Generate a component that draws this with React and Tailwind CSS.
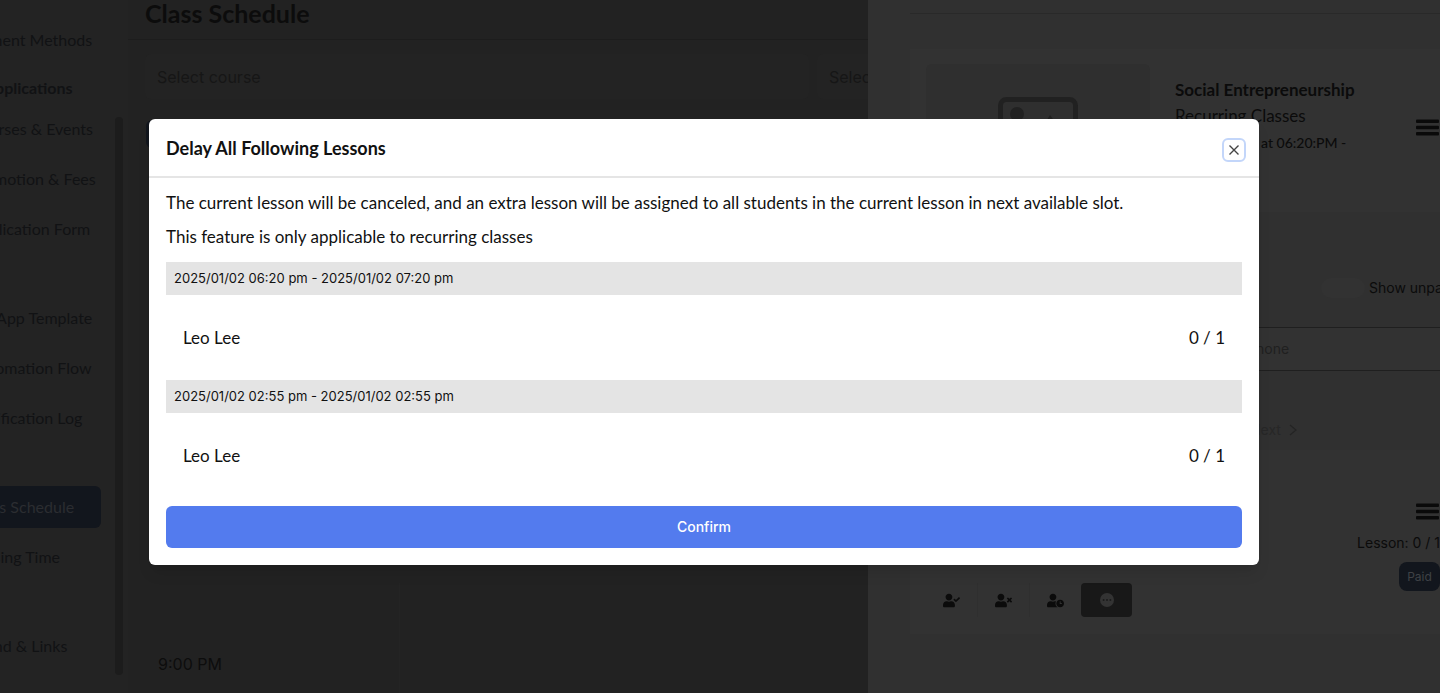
import { FaUserCheck, FaUserClock, FaUserTimes } from "react-icons/fa";

const navGroups = [
  ["Courses & Events", "Promotion & Fees", "Application Form"],
  ["My App Template", "Automation Flow", "Notification Log"],
  ["Class Schedule", "Closing Time"],
  ["Brand & Links"],
];

const lessons = [
  { time: "2025/01/02 06:20 pm - 2025/01/02 07:20 pm", student: "Leo Lee", count: "0 / 1" },
  { time: "2025/01/02 02:55 pm - 2025/01/02 02:55 pm", student: "Leo Lee", count: "0 / 1" },
];

function Bars() {
  return (
    <svg width="24" height="17" viewBox="0 0 24 17" fill="#0a0a0a" aria-hidden="true">
      <rect x="0" y="0.5" width="23" height="3.4" rx="1" />
      <rect x="0" y="6.8" width="23" height="3.4" rx="1" />
      <rect x="0" y="13" width="23" height="3.4" rx="1" />
    </svg>
  );
}

function Sidebar() {
  return (
    <aside className="flex w-[128px] shrink-0 overflow-hidden bg-[#232323]">
      <nav className="-ml-[46px] flex w-[147px] shrink-0 flex-col pt-[19px] text-base whitespace-nowrap text-[#111214]">
        <a href="#payment" className="flex h-[42px] items-center pl-[10px]">Payment Methods</a>
        <h2 className="flex h-[47px] items-center pt-[6px] pl-[30px] text-base font-bold">Applications</h2>
        <div className="flex flex-col gap-[47px]">
          {navGroups.map((group) => (
            <div key={group[0]} className="flex flex-col gap-2">
              {group.map((item) => (
                <a
                  key={item}
                  href="#nav"
                  className={
                    item === "Class Schedule"
                      ? "flex h-[42px] items-center rounded-md bg-[#12161d] pl-4 text-[#2b2d31]"
                      : "flex h-[42px] items-center pl-4"
                  }
                >
                  {item}
                </a>
              ))}
            </div>
          ))}
        </div>
      </nav>
      <div className="mt-[117px] ml-[14px] h-[558px] w-2 shrink-0 rounded-sm bg-[#1c1c1c]" />
    </aside>
  );
}

function Schedule() {
  return (
    <main className="flex min-w-0 flex-1 flex-col overflow-hidden bg-[#222222]">
      <header className="flex h-10 shrink-0 items-start border-b border-[#1d1d1d] pl-[17px]">
        <h1 className="text-[25px] leading-[26px] font-bold text-[#0c0c0c]">Class Schedule</h1>
      </header>
      <div className="mt-[14px] ml-[17px] flex shrink-0 gap-2 overflow-hidden font-[Inter,sans-serif] text-base text-[#161616]">
        <select aria-label="Course" className="h-[45px] flex-1 appearance-none rounded-md bg-[#232323] px-3">
          <option>Select course</option>
        </select>
        <select aria-label="Teacher" className="h-[45px] w-[51px] appearance-none rounded-l-md bg-[#232323] pl-3">
          <option>Select teacher</option>
        </select>
      </div>
      <div className="mt-[21px] ml-[18px] h-7 w-24 shrink-0 rounded-md bg-[#12161d]" />
      <div className="mt-auto h-[110px] w-[272px] shrink-0 border-r border-[#242424] pt-[68px] pl-[30px] font-[Inter,sans-serif] text-base leading-[26px] text-[#0d0d0d]">
        9:00 PM
      </div>
    </main>
  );
}

function Drawer() {
  return (
    <aside className="flex w-[572px] shrink-0 flex-col overflow-hidden bg-[#303030] pt-[13px] pl-[42px] text-[#0b0b0b]">
      <div className="h-px shrink-0 bg-[#292929]" />
      <section className="mt-[35px] flex h-[163px] shrink-0 items-start bg-[#323232] pt-[15px] pl-4">
        <div className="flex h-[132px] w-56 shrink-0 items-center justify-center rounded-md bg-[#2f2f2f]">
          <svg width="80" height="66" viewBox="0 0 80 66" fill="none" stroke="#212121" strokeWidth="5" aria-hidden="true">
            <rect x="2.5" y="2.5" width="75" height="61" rx="6" />
            <circle cx="19" cy="17" r="7" fill="#212121" stroke="none" />
            <path d="M8 54 L26 34 L36 44 L52 18 L72 46 V54 Z" fill="#212121" stroke="none" />
          </svg>
        </div>
        <div className="ml-[25px] flex-1 pt-[13px]">
          <h2 className="text-[17px] leading-[26px] font-bold">Social Entrepreneurship</h2>
          <p className="text-[17px] leading-[26px]">Recurring Classes</p>
          <p className="text-sm leading-[28px] font-medium">Thu 2025/01 at 06:20:PM -</p>
        </div>
        <button type="button" aria-label="Class menu" className="mt-[55px]">
          <Bars />
        </button>
      </section>

      <div className="mt-16 flex h-6 shrink-0 items-center justify-end overflow-hidden font-[Inter,sans-serif] text-sm">
        <label className="flex w-[119px] shrink-0 items-center gap-1 whitespace-nowrap">
          <input type="checkbox" className="h-5 w-11 shrink-0 appearance-none rounded-full bg-[#323232]" />
          Show unpaid
        </label>
      </div>

      <div className="mt-[27px] flex h-11 shrink-0 items-center border-y border-[#1f1f1f] bg-[#323232]">
        <input
          type="text"
          aria-label="Search"
          placeholder="Search by student name, email or phone"
          className="ml-[112px] w-[310px] bg-transparent font-[Inter,sans-serif] text-sm placeholder:text-[#202020]"
        />
      </div>

      <div className="mt-[45px] flex h-7 shrink-0 items-center gap-2 pl-[340px] font-[Inter,sans-serif] text-sm text-[#272727]">
        <button type="button" className="flex items-center gap-2">
          Next
          <svg width="8" height="12" viewBox="0 0 8 12" fill="none" stroke="#242424" strokeWidth="1.3" aria-hidden="true">
            <path d="M1 1 L7 6 L1 11" />
          </svg>
        </button>
      </div>

      <section className="mt-[6px] flex h-[184px] shrink-0 flex-col bg-[#323232] pt-[53px] font-[Inter,sans-serif]">
        <div className="flex flex-col items-end">
          <button type="button" aria-label="Student menu"><Bars /></button>
          <p className="mt-[11px] text-sm leading-6">Lesson: 0 / 1</p>
          <span className="mt-[7px] flex h-[29px] w-[41px] items-center justify-center rounded-lg bg-[#12161d] text-xs text-[#3f4246]">
            Paid
          </span>
        </div>
        <div className="-mt-2 flex pl-4">
          <button type="button" aria-label="Mark present" className="flex h-[34px] w-[52px] items-center justify-center border-r border-[#2f2f2f]">
            <FaUserCheck size={17} />
          </button>
          <button type="button" aria-label="Mark absent" className="flex h-[34px] w-[52px] items-center justify-center border-r border-[#2f2f2f]">
            <FaUserTimes size={17} />
          </button>
          <button type="button" aria-label="Mark late" className="flex h-[34px] w-[51px] items-center justify-center">
            <FaUserClock size={17} />
          </button>
          <button type="button" aria-label="More actions" className="flex h-[34px] w-[51px] items-center justify-center rounded-sm bg-[#181818]">
            <svg width="14" height="14" viewBox="0 0 14 14" aria-hidden="true">
              <circle cx="7" cy="7" r="7" fill="#333333" />
              <circle cx="3.6" cy="7" r="1" fill="#1b1b1b" />
              <circle cx="7" cy="7" r="1" fill="#1b1b1b" />
              <circle cx="10.4" cy="7" r="1" fill="#1b1b1b" />
            </svg>
          </button>
        </div>
      </section>
    </aside>
  );
}

function DelayDialog() {
  return (
    <div className="absolute inset-0 flex items-start pt-[119px] pr-[181px] pl-[149px]">
      <div role="dialog" aria-labelledby="dialog-title" className="flex-1 rounded-md bg-white text-[#111111] shadow-lg">
        <header className="flex h-[59px] items-center justify-between border-b-2 border-[#e5e5e5] pr-[13px] pl-[17px]">
          <h2 id="dialog-title" className="text-lg leading-6 font-bold">Delay All Following Lessons</h2>
          <button
            type="button"
            aria-label="Close"
            className="mt-1 flex size-6 items-center justify-center rounded-md border-2 border-[#c3d6fa]"
          >
            <svg width="10" height="10" viewBox="0 0 10 10" fill="none" stroke="#444444" strokeWidth="1.4" aria-hidden="true">
              <path d="M0.5 0.5 L9.5 9.5 M9.5 0.5 L0.5 9.5" />
            </svg>
          </button>
        </header>
        <div className="px-[17px] pt-2 pb-[17px]">
          <p className="text-[17px] leading-[34px]">
            The current lesson will be canceled, and an extra lesson will be assigned to all students in the current lesson in next available slot.
          </p>
          <p className="text-[17px] leading-[34px]">This feature is only applicable to recurring classes</p>
          <div className="mt-2">
            {lessons.map((lesson) => (
              <section key={lesson.time}>
                <h3 className="bg-[#e4e4e4] px-2 font-[Inter,sans-serif] text-[13px] leading-[33px] font-normal">{lesson.time}</h3>
                <div className="flex h-[85px] items-center justify-between px-[17px] text-[17px]">
                  <span>{lesson.student}</span>
                  <span>{lesson.count}</span>
                </div>
              </section>
            ))}
          </div>
          <button
            type="button"
            className="mt-2 h-[42px] w-full rounded-md bg-[#537bee] font-[Inter,sans-serif] text-sm font-medium text-white"
          >
            Confirm
          </button>
        </div>
      </div>
    </div>
  );
}

export default function App() {
  return (
    <div className="relative flex h-screen overflow-hidden bg-[#232323] font-[Lato,sans-serif]">
      <Sidebar />
      <Schedule />
      <Drawer />
      <DelayDialog />
    </div>
  );
}
